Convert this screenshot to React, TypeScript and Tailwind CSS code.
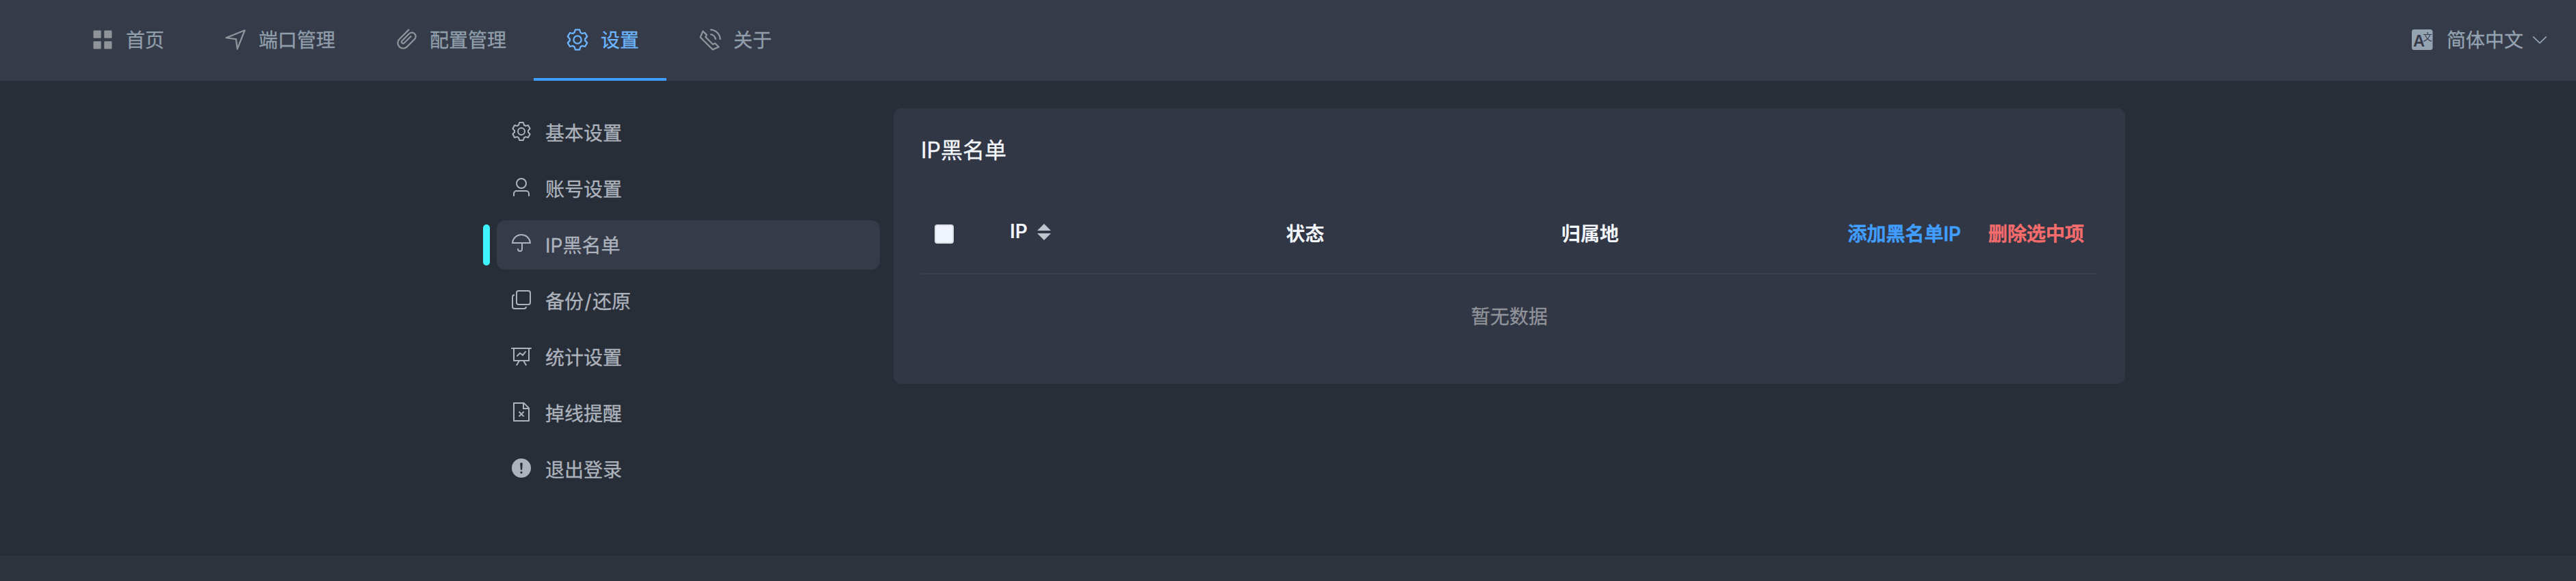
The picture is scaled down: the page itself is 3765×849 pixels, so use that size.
import type { ReactNode } from "react";

const ICONS = {
  menu: "M160 448a32 32 0 0 1-32-32V160a32 32 0 0 1 32-32h256a32 32 0 0 1 32 32v256a32 32 0 0 1-32 32H160zm448 0a32 32 0 0 1-32-32V160a32 32 0 0 1 32-32h256a32 32 0 0 1 32 32v256a32 32 0 0 1-32 32H608zM160 896a32 32 0 0 1-32-32V608a32 32 0 0 1 32-32h256a32 32 0 0 1 32 32v256a32 32 0 0 1-32 32H160zm448 0a32 32 0 0 1-32-32V608a32 32 0 0 1 32-32h256a32 32 0 0 1 32 32v256a32 32 0 0 1-32 32H608z",
  position:
    "m249.6 417.088 319.744 43.072 39.168 310.272L845.12 178.88 249.6 417.088zm-129.024 47.168a32 32 0 0 1-7.68-61.44l777.792-311.04a32 32 0 0 1 41.6 41.6l-310.336 775.68a32 32 0 0 1-61.44-7.808L512 516.992l-391.424-52.736z",
  paperclip:
    "M602.496 240.448A192 192 0 1 1 874.048 512l-316.8 316.8A256 256 0 0 1 195.2 466.752L602.496 59.456l45.248 45.248L240.448 512A192 192 0 0 0 512 783.552l316.8-316.8a128 128 0 1 0-181.056-181.056L353.6 579.904a32 32 0 1 0 45.248 45.248l294.144-294.144 45.312 45.248L444.096 670.4a96 96 0 1 1-135.744-135.744l294.144-294.208z",
  setting:
    "M600.704 64a32 32 0 0 1 30.464 22.208l35.2 109.376c14.784 7.232 28.928 15.36 42.432 24.512l112.384-24.192a32 32 0 0 1 34.432 15.36L944.32 364.8a32 32 0 0 1-4.032 37.504l-77.12 85.12a357.12 357.12 0 0 1 0 49.024l77.12 85.248a32 32 0 0 1 4.032 37.504l-88.704 153.6a32 32 0 0 1-34.432 15.296L708.8 803.904c-13.44 9.088-27.648 17.28-42.368 24.512l-35.264 109.376A32 32 0 0 1 600.704 960H423.296a32 32 0 0 1-30.464-22.208L357.696 828.48a351.616 351.616 0 0 1-42.56-24.64l-112.32 24.256a32 32 0 0 1-34.432-15.36L79.68 659.2a32 32 0 0 1 4.032-37.504l77.12-85.248a357.12 357.12 0 0 1 0-48.896l-77.12-85.248A32 32 0 0 1 79.68 364.8l88.704-153.6a32 32 0 0 1 34.432-15.296l112.32 24.256c13.568-9.152 27.776-17.408 42.56-24.64l35.2-109.312A32 32 0 0 1 423.232 64H600.64zm-23.424 64H446.72l-36.352 113.088-24.512 11.968a294.113 294.113 0 0 0-34.816 20.096l-22.656 15.36-116.224-25.088-65.28 113.152 79.68 88.192-1.92 27.136a293.12 293.12 0 0 0 0 40.192l1.92 27.136-79.808 88.192 65.344 113.152 116.224-25.024 22.656 15.296a294.113 294.113 0 0 0 34.816 20.096l24.512 11.968L446.72 896h130.688l36.48-113.152 24.448-11.904a288.282 288.282 0 0 0 34.752-20.096l22.592-15.296 116.288 25.024 65.28-113.152-79.744-88.192 1.92-27.136a293.12 293.12 0 0 0 0-40.256l-1.92-27.136 79.808-88.128-65.344-113.152-116.288 24.96-22.592-15.232a287.616 287.616 0 0 0-34.752-20.096l-24.448-11.904L577.344 128zM512 320a192 192 0 1 1 0 384 192 192 0 0 1 0-384zm0 64a128 128 0 1 0 0 256 128 128 0 0 0 0-256z",
  phone:
    "M79.36 432.256 591.744 944.64a32 32 0 0 0 35.2 6.784l253.44-108.544a32 32 0 0 0 9.984-52.032l-153.856-153.92a32 32 0 0 0-36.928-6.016l-69.888 34.944L358.08 394.24l35.008-69.888a32 32 0 0 0-5.952-36.928L233.152 133.568a32 32 0 0 0-52.032 10.048L72.512 397.056a32 32 0 0 0 6.784 35.2zm60.48-29.952 81.536-190.08L325.568 316.48l-24.64 49.216-20.608 41.216 32.576 32.64 271.552 271.552 32.64 32.64 41.216-20.672 49.28-24.576 104.192 104.128-190.08 81.472L139.84 402.304zM512 320v-64a256 256 0 0 1 256 256h-64a192 192 0 0 0-192-192zm0-192V64a448 448 0 0 1 448 448h-64a384 384 0 0 0-384-384z",
  user: "M512 512a192 192 0 1 0 0-384 192 192 0 0 0 0 384zm0 64a256 256 0 1 1 0-512 256 256 0 0 1 0 512zm320 320v-96a96 96 0 0 0-96-96H288a96 96 0 0 0-96 96v96a32 32 0 1 1-64 0v-96a160 160 0 0 1 160-160h448a160 160 0 0 1 160 160v96a32 32 0 1 1-64 0z",
  umbrella:
    "M320 768a32 32 0 1 1 64 0 64 64 0 0 0 128 0V512H64a448 448 0 1 1 896 0H576v256a128 128 0 1 1-256 0zm570.688-320a384.128 384.128 0 0 0-757.376 0h757.376z",
  copy: "M768 832a128 128 0 0 1-128 128H192A128 128 0 0 1 64 832V384a128 128 0 0 1 128-128v64a64 64 0 0 0-64 64v448a64 64 0 0 0 64 64h448a64 64 0 0 0 64-64h64zM384 128a64 64 0 0 0-64 64v448a64 64 0 0 0 64 64h448a64 64 0 0 0 64-64V192a64 64 0 0 0-64-64H384zm0-64h448a128 128 0 0 1 128 128v448a128 128 0 0 1-128 128H384a128 128 0 0 1-128-128V192A128 128 0 0 1 384 64z",
  dataLine:
    "M359.168 768H160a32 32 0 0 1-32-32V192H64a32 32 0 0 1 0-64h896a32 32 0 1 1 0 64h-64v544a32 32 0 0 1-32 32H665.216l110.848 192h-73.856L591.36 768H433.024L322.176 960H248.32l110.848-192zM832 192H192v512h640V192zM342.656 534.656a32 32 0 1 1-45.312-45.312L444.992 341.76l125.44 94.08L679.04 300.032a32 32 0 1 1 49.92 39.936L581.632 524.224 451.008 426.24 342.656 534.592z",
  docDelete:
    "M805.504 320 640 154.496V320h165.504zM832 384H576V128H192v768h640V384zM160 64h480l256 256v608a32 32 0 0 1-32 32H160a32 32 0 0 1-32-32V96a32 32 0 0 1 32-32zm308.992 546.304-90.496-90.624 45.248-45.248 90.56 90.496 90.496-90.432 45.248 45.248-90.496 90.56 90.496 90.496-45.248 45.248-90.496-90.496-90.56 90.496-45.248-45.248 90.496-90.496z",
  warning:
    "M512 64a448 448 0 1 1 0 896 448 448 0 0 1 0-896zm0 192a58.432 58.432 0 0 0-58.24 63.744l23.36 256.384a35.072 35.072 0 0 0 69.76 0l23.296-256.384A58.432 58.432 0 0 0 512 256zm0 512a51.2 51.2 0 1 0 0-102.4 51.2 51.2 0 0 0 0 102.4z",
  arrowDown:
    "M831.872 340.864 512 652.672 192.128 340.864a30.592 30.592 0 0 0-42.752 0 29.12 29.12 0 0 0 0 41.6L489.664 714.24a32 32 0 0 0 44.672 0l340.288-331.712a29.12 29.12 0 0 0 0-41.728 30.592 30.592 0 0 0-42.752 0z",
};

type IconName = keyof typeof ICONS;

function Icon({ name, className }: { name: IconName; className: string }) {
  return (
    <svg viewBox="0 0 1024 1024" fill="currentColor" className={className} aria-hidden="true">
      <path d={ICONS[name]} />
    </svg>
  );
}

const NAV: { icon: IconName; label: string; active?: boolean }[] = [
  { icon: "menu", label: "首页" },
  { icon: "position", label: "端口管理" },
  { icon: "paperclip", label: "配置管理" },
  { icon: "setting", label: "设置", active: true },
  { icon: "phone", label: "关于" },
];

const SIDE: { id: string; icon: IconName; label: ReactNode; active?: boolean }[] = [
  { id: "basic", icon: "setting", label: "基本设置" },
  { id: "account", icon: "user", label: "账号设置" },
  { id: "blacklist", icon: "umbrella", label: "IP黑名单", active: true },
  {
    id: "backup",
    icon: "copy",
    label: (
      <>
        备份<span className="mx-[1.5px]">/</span>还原
      </>
    ),
  },
  { id: "stats", icon: "dataLine", label: "统计设置" },
  { id: "offline", icon: "docDelete", label: "掉线提醒" },
  { id: "logout", icon: "warning", label: "退出登录" },
];

function TranslateIcon() {
  return (
    <svg viewBox="0 0 32 32" className="mr-5 size-8 shrink-0" aria-hidden="true">
      <rect x="1" y="1" width="30.5" height="30" rx="3.5" fill="#94a3b1" />
      <text x="3" y="25.7" fontSize="23.5" fontWeight="700" fill="#363b49" fontFamily="Liberation Sans, sans-serif">
        A
      </text>
      <text x="17.3" y="17.3" fontSize="13.5" fill="#363b49" fontFamily="Noto Sans CJK SC, sans-serif">
        文
      </text>
    </svg>
  );
}

function Header() {
  return (
    <header className="flex h-[118px] items-stretch justify-between bg-[#363b49] pl-[86px] pr-[39px]">
      <nav className="flex">
        {NAV.map((item) => (
          <a
            key={item.label}
            className={
              item.active
                ? "flex items-center border-b-4 border-[#409eff] px-10 text-[#6cb5ff]"
                : "flex items-center border-b-4 border-transparent px-10 text-[#909fab]"
            }
          >
            <span
              className={
                item.active
                  ? "mr-2.5 flex w-12 justify-center"
                  : "mr-2.5 flex w-12 justify-center text-[#909399]"
              }
            >
              <Icon name={item.icon} className="mt-px size-9" />
            </span>
            <span className="pt-[3px]">{item.label}</span>
          </a>
        ))}
      </nav>
      <div className="flex items-center pb-0.5 text-[#94a3b1]">
        <TranslateIcon />
        <span className="pt-px">简体中文</span>
        <Icon name="arrowDown" className="ml-2.5 size-7" />
      </div>
    </header>
  );
}

function Sidebar() {
  return (
    <aside className="flex w-[580px] flex-col gap-2.5">
      {SIDE.map((item) => (
        <div key={item.id} className="flex h-[72px] items-center gap-2.5">
          <span className={item.active ? "h-[60px] w-2.5 rounded-full bg-[#3ff2ff]" : "w-2.5"} />
          <a
            className={
              item.active
                ? "flex h-full flex-1 items-center rounded-xl bg-[#363b49] pl-5 text-[#adb3bd]"
                : "flex h-full flex-1 items-center rounded-xl pl-5 text-[#adb3bd]"
            }
          >
            <Icon name={item.icon} className="mb-1 mr-[19px] size-8" />
            <span className="pt-0.5">{item.label}</span>
          </a>
        </div>
      ))}
    </aside>
  );
}

function HeadCell({ children }: { children?: ReactNode }) {
  return (
    <div className="flex items-center px-5 pt-0.5 font-bold text-[#f3f6fb] [-webkit-text-stroke:0px]">{children}</div>
  );
}

function BlacklistPanel() {
  return (
    <section className="h-[403px] w-[1800px] rounded-xl bg-[#323745] px-10 pt-10 text-[#f3f6fb]">
      <h2 className="text-[32px] leading-[44px]">IP黑名单</h2>
      <div className="mt-[40px] grid h-[119px] grid-cols-[110px_1fr_1fr_1fr_1fr] border-b-2 border-[#3b404f]">
        <div className="flex items-center pl-5 pt-[3px]">
          <span className="size-7 rounded-[4px] border-2 border-[#dcdfe6] bg-[#eff4ff]" />
        </div>
        <HeadCell>
          <span className="mb-[7px] font-semibold">IP</span>
          <svg viewBox="0 0 20 24" className="mb-[5px] ml-[14px] h-6 w-5" fill="#c0c4cc" aria-hidden="true">
            <path d="M10 0 20 10H0zM10 24 0 14h20z" />
          </svg>
        </HeadCell>
        <HeadCell>
          <span className="pl-px">状态</span>
        </HeadCell>
        <HeadCell>
          <span className="pl-px">归属地</span>
        </HeadCell>
        <div className="flex items-center justify-end gap-10 pr-5 pt-[3px] font-medium [-webkit-text-stroke:0.8px]">
          <button className="text-[#409eff]">添加黑名单IP</button>
          <button className="text-[#f56c6c]">删除选中项</button>
        </div>
      </div>
      <div className="flex h-[120px] items-center justify-center pt-[3px] text-[#909399]">暂无数据</div>
    </section>
  );
}

export default function App() {
  return (
    <div className="flex h-[849px] w-[3765px] flex-col bg-[#282e38] font-['Inter','Noto_Sans_CJK_SC',sans-serif] text-[28px] leading-10 [-webkit-text-stroke:0.3px]">
      <Header />
      <main className="flex flex-1 items-start gap-5 pl-[706px] pt-10">
        <Sidebar />
        <BlacklistPanel />
      </main>
      <footer className="h-[37px] bg-[#2d343e]" />
    </div>
  );
}
